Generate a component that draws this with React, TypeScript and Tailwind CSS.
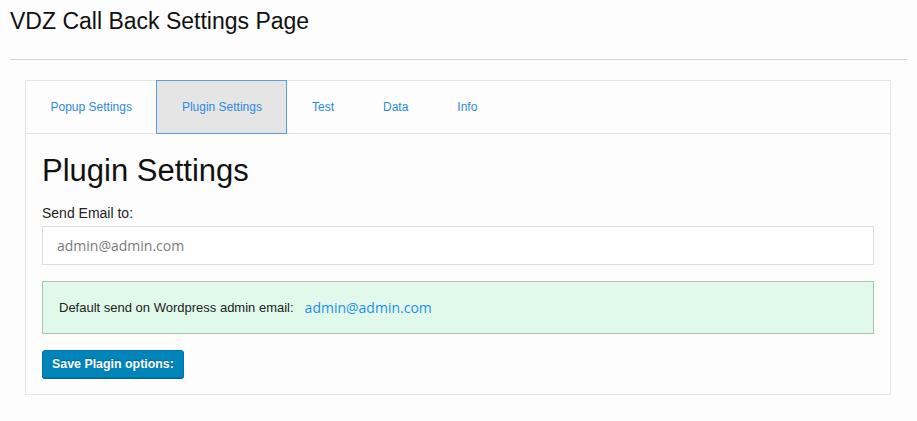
const tabs = ["Popup Settings", "Plugin Settings", "Test", "Data", "Info"];

export default function App() {
  const active = "Plugin Settings";

  return (
    <div className="min-h-screen bg-[#fdfdfd] px-[10px] pt-[8px] font-['Liberation_Sans',Arial,sans-serif] text-[#111]">
      <h1 className="text-[23px] leading-[26px] font-normal text-[#111]">VDZ Call Back Settings Page</h1>
      <hr className="mt-[25px] border-t border-[#d3d3d3]" />

      <div className="mt-[20px] ml-[15px] w-[866px] border border-[#e5e5e5] bg-[#fdfdfd]">
        <div className="flex h-[53px] border-b border-[#e5e5e5]">
          {tabs.map((t) => (
            <div
              key={t}
              className={
                t === active
                  ? "-mt-px -mb-px flex h-[54px] items-center border border-[#5b9dd9] bg-[#e5e5e5] px-[24.5px] text-[12px] text-[#2b8ae2]"
                  : "flex items-center px-[24.5px] text-[12px] text-[#2b8ae2]"
              }
            >
              {t}
            </div>
          ))}
        </div>

        <div className="px-[16px] pt-[20px] pb-[16px]">
          <h2 className="text-[31px] leading-[34px] font-normal text-[#111]">Plugin Settings</h2>
          <div className="mt-[17px] text-[14px] leading-[16px] text-[#222]">Send Email to:</div>
          <input
            className="mt-[5px] block h-[39px] w-full border border-[#dddddd] bg-white px-[14px] font-['Open_Sans',sans-serif] text-[14px] text-[#333] placeholder:text-[#7a7a7a] outline-none"
            placeholder="admin@admin.com"
          />
          <div className="mt-[16px] flex h-[53px] items-center border border-[#a8c4b0] bg-[#e1f9ea] px-[16px]">
            <span className="text-[13px] text-[#222]">Default send on Wordpress admin email:</span>
            <span className="ml-[11px] font-['Open_Sans',sans-serif] text-[14px] text-[#1e8fe8]">admin@admin.com</span>
          </div>
          <button className="mt-[16px] block h-[28px] rounded-[3px] border border-[#0073aa] bg-[#0085ba] px-[9px] text-[12.4px] font-bold text-white shadow-[0_1px_0_#006799] [text-shadow:0_-1px_1px_#006799]">
            Save Plagin options:
          </button>
        </div>
      </div>
    </div>
  );
}
